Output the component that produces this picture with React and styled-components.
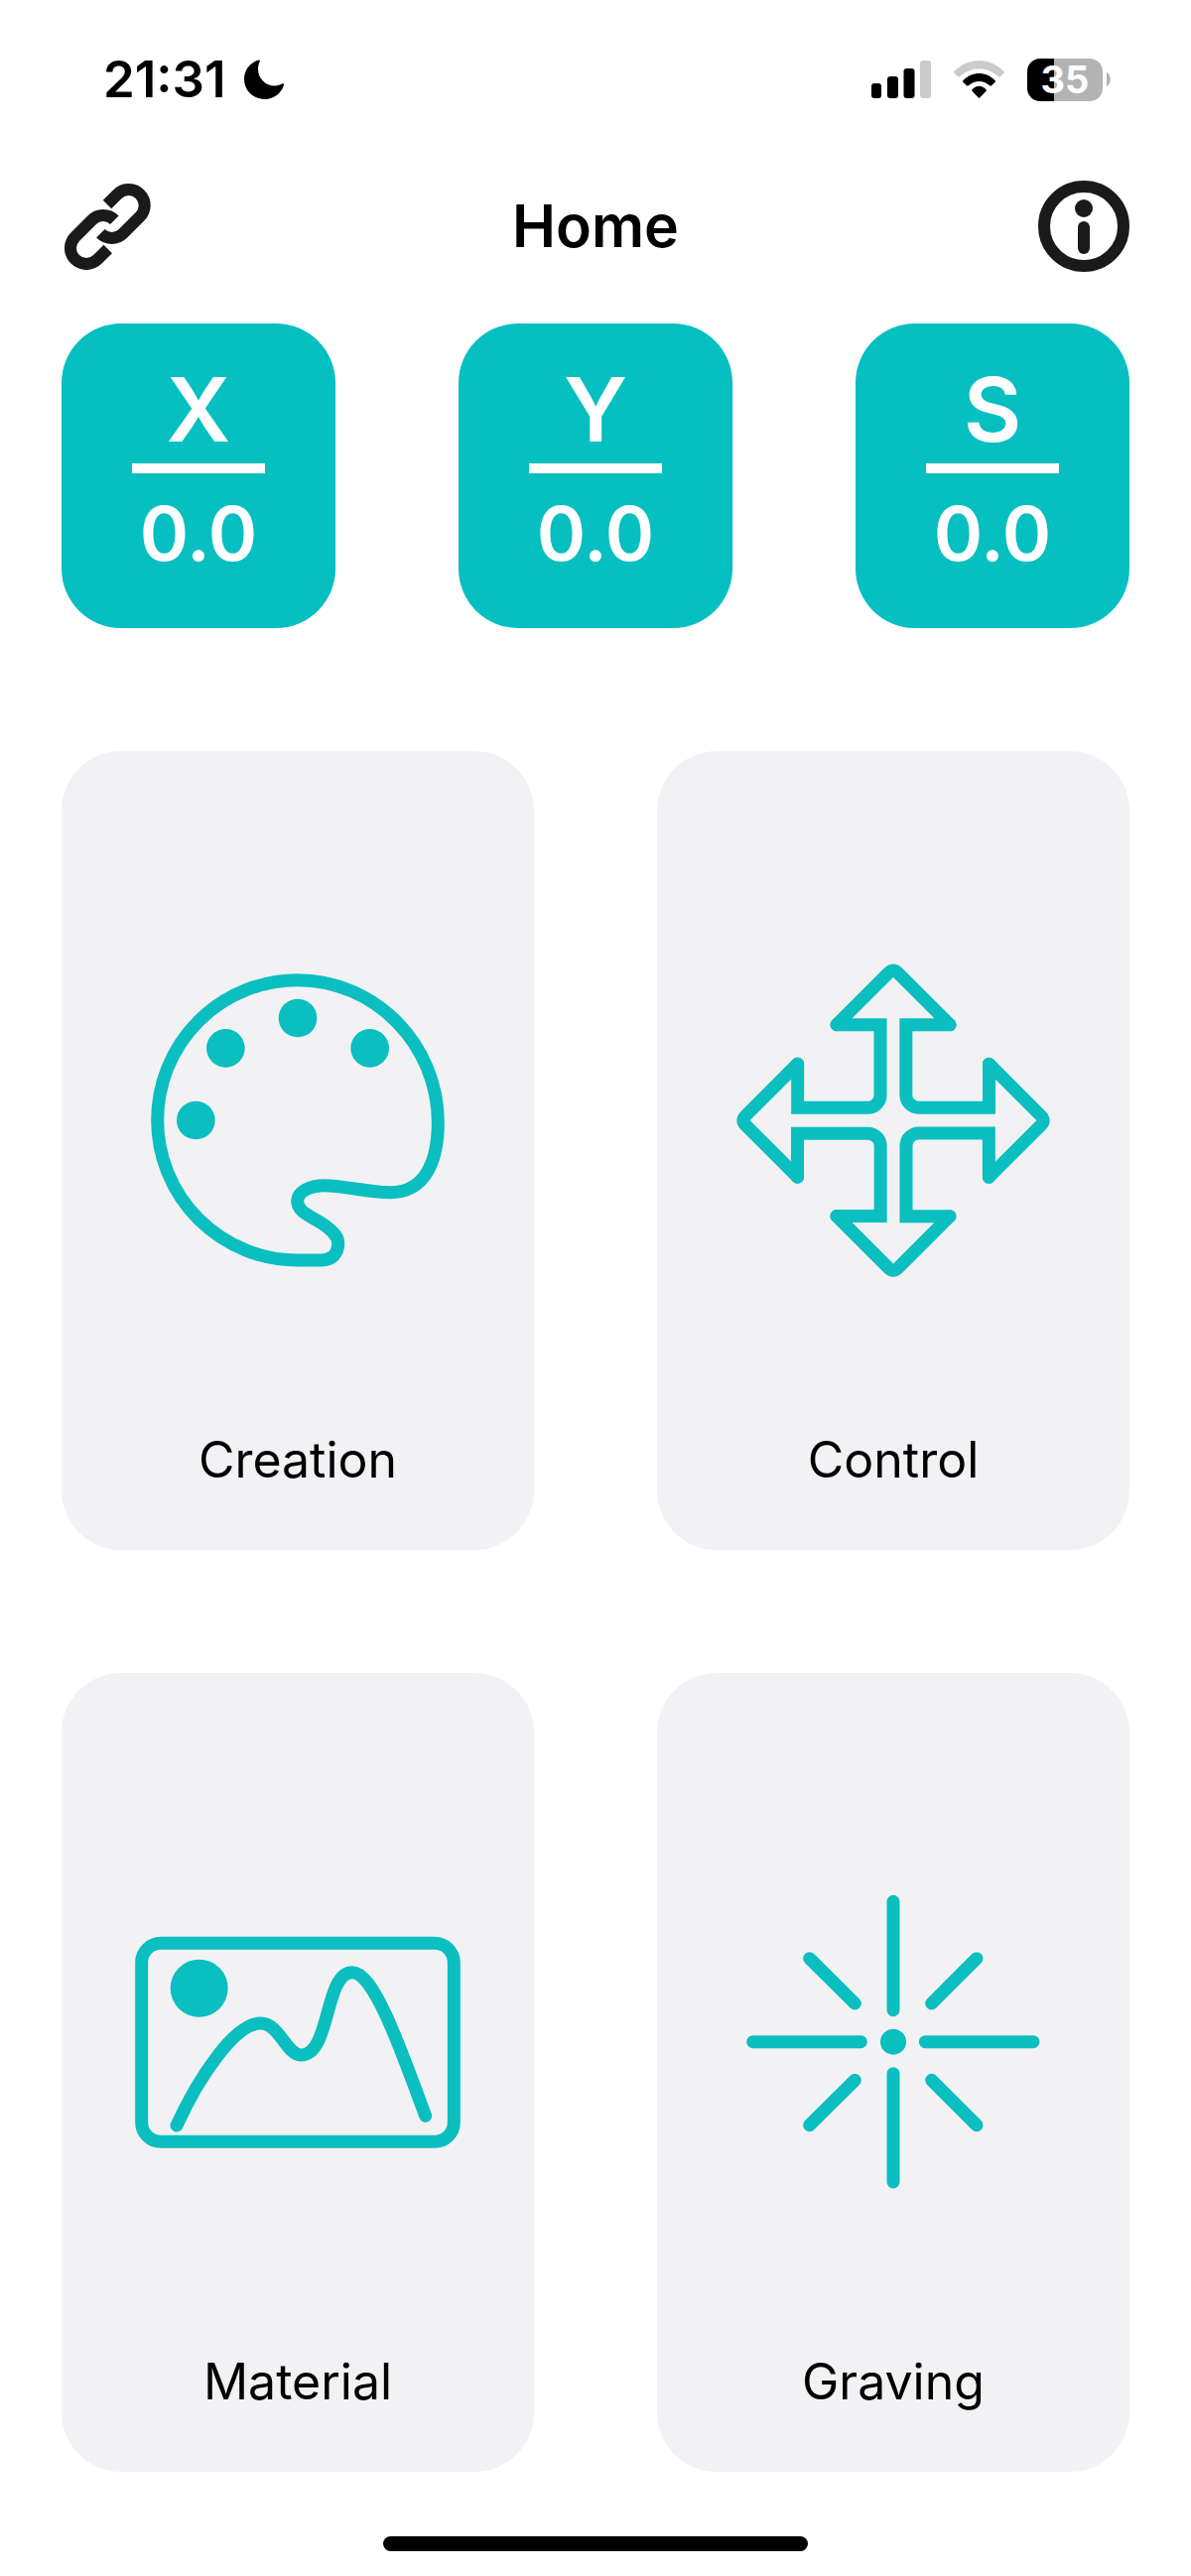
import styled, { createGlobalStyle } from "styled-components";

const axes = [
  { name: "X", value: "0.0" },
  { name: "Y", value: "0.0" },
  { name: "S", value: "0.0" },
];

const menu = [
  { label: "Creation", path: "#creation", Icon: PaletteIcon },
  { label: "Control", path: "#control", Icon: ArrowsIcon },
  { label: "Material", path: "#material", Icon: PictureIcon },
  { label: "Graving", path: "#graving", Icon: LaserIcon },
];

export default function App() {
  return (
    <>
      <GlobalStyle />
      <StatusBar />
      <Header>
        <IconButton type="button" aria-label="Connect">
          <LinkIcon />
        </IconButton>
        <h1>Home</h1>
        <IconButton type="button" aria-label="Information">
          <InfoIcon />
        </IconButton>
      </Header>
      <main>
        <Axes>
          {axes.map((axis) => (
            <Axis key={axis.name}>
              <AxisName>{axis.name}</AxisName>
              <Divider />
              <AxisValue>{axis.value}</AxisValue>
            </Axis>
          ))}
        </Axes>
        <Menu>
          {menu.map(({ label, path, Icon }) => (
            <Card key={label} href={path}>
              <Icon />
              <p>{label}</p>
            </Card>
          ))}
        </Menu>
      </main>
      <HomeIndicator />
    </>
  );
}

function StatusBar() {
  return (
    <Status>
      <Clock>
        <span>21:31</span>
        <svg width="40" height="40" viewBox="0 0 40 40" aria-hidden="true">
          <path d="M14.5 0.5C6 3 0 10.500 0 19.500C0 31 9 40 20.500 40C29.500 40 37 34.500 40 26C40.400 24.500 39.500 24 38 24.600C36 25.400 33.500 26.500 31 26.500C21.500 26.500 14 19 14 9.500C14 7 14.500 4.500 15.600 2.300C16.200 0.900 15.700 0.100 14.500 0.500Z" />
        </svg>
      </Clock>
      <Indicators>
        <svg width="60" height="38" viewBox="0 0 60 38" aria-hidden="true">
          <rect x="0" y="23" width="10" height="15" rx="3" />
          <rect x="16" y="16" width="11" height="22" rx="3" />
          <rect x="32.500" y="8" width="11" height="30" rx="3" />
          <rect x="49" y="0" width="11" height="38" rx="3" fill="#cbcbcb" />
        </svg>
        <svg width="51" height="38" viewBox="0 0 153 114" aria-hidden="true">
          <path
            fill="#cbcbcb"
            d="M2 32C23 12 49 0 76.500 0S130 12 151 32Q154 35 151 38L140 49Q137 51 134 48C118 34 98 25 76.500 25S35 34 19 48Q16 51 13 49L2 38Q-1 35 2 32Z"
          />
          <path d="M29 59C42 47 58 39 76.500 39S111 47 124 59Q128 62 125 65L114 76Q111 78 108 75C99 68 88 63 76.500 63S54 68 45 75Q42 78 39 76L28 65Q25 62 29 59Z" />
          <path d="M56 87C61 81 68 77 76.500 77S92 81 97 87Q100 90 97 93L79 112Q76.500 115 74 112L56 93Q53 90 56 87Z" />
        </svg>
        <BatteryWrap>
          <Battery>35</Battery>
          <svg width="4" height="14" viewBox="0 0 4 14" aria-hidden="true">
            <path d="M0 0C5 2 5 12 0 14Z" fill="#b3b3b3" />
          </svg>
        </BatteryWrap>
      </Indicators>
    </Status>
  );
}

function LinkIcon() {
  return (
    <svg width="87" height="87" viewBox="75 72 261 261" aria-hidden="true">
      <g fill="none" stroke="#1a1a1a" strokeWidth="36">
        <path d="M204 135L235 104A48 48 0 0 1 303 172L252 223A48 48 0 0 1 184 223" />
        <path d="M206 270L175 301A48 48 0 0 1 107 233L158 182A48 48 0 0 1 226 182" />
      </g>
    </svg>
  );
}

function InfoIcon() {
  return (
    <svg width="92" height="92" viewBox="0 0 92 92" aria-hidden="true">
      <circle cx="46" cy="46" r="40" fill="none" stroke="#1a1a1a" strokeWidth="12" />
      <circle cx="46" cy="28" r="9" fill="#1a1a1a" />
      <path d="M46 47V68" stroke="#1a1a1a" strokeWidth="12" strokeLinecap="round" />
    </svg>
  );
}

function PaletteIcon() {
  return (
    <CardIcon viewBox="-30 -32 1080 1080" aria-hidden="true">
      <path d="M510 931A424 424 0 0 1 86 508A424 424 0 0 1 510 84C745 84 934 280 934 515C934 640 890 726 790 726C720 726 650 705 590 705C545 705 509 725 509 752C509 790 560 800 600 832C622 850 632 862 632 880C632 910 615 931 580 931Z" />
      <Dot cx="510" cy="199" r="58" />
      <Dot cx="292" cy="290" r="58" />
      <Dot cx="728" cy="290" r="58" />
      <Dot cx="202" cy="508" r="58" />
    </CardIcon>
  );
}

function ArrowsIcon() {
  return (
    <CardIcon viewBox="0 -3 1080 1080" aria-hidden="true">
      {[0, 90, 180, 270].map((angle) => (
        <g key={angle} transform={`rotate(${angle} 540 537.5)`}>
          <path d="M369 248L526 91Q540 77 554 91L711 248" />
          <path
            strokeLinejoin="miter"
            d="M369 248H501V461A38 38 0 0 1 463 499H251V366"
          />
        </g>
      ))}
    </CardIcon>
  );
}

function PictureIcon() {
  return (
    <CardIcon viewBox="0 -157 1080 1080" aria-hidden="true">
      <rect x="68" y="84" width="944" height="600" rx="58" />
      <Dot cx="242" cy="220" r="87" />
      <path d="M174 635C240 490 350 326 428 326C485 326 505 422 550 422C640 422 620 172 705 172C770 172 850 400 926 606" />
    </CardIcon>
  );
}

function LaserIcon() {
  return (
    <CardIcon viewBox="-30 -35 1080 1080" aria-hidden="true">
      <Dot cx="510" cy="504" r="39" />
      <path d="M510 80V408M510 600V928M86 504H412M607 504H933" />
      <path d="M257 252L394 388M762 252L626 388M257 756L394 620M762 756L626 620" />
    </CardIcon>
  );
}

const GlobalStyle = createGlobalStyle`
  * {
    box-sizing: border-box;
    margin: 0;
    padding: 0;
  }
  body {
    background-color: #ffffff;
    color: #000000;
    font-family: Inter, "Liberation Sans", sans-serif;
  }
  svg {
    display: block;
    flex-shrink: 0;
  }
`;

const Status = styled.div`
  height: 160px;
  padding: 0 81px 0 104px;
  display: flex;
  align-items: center;
  justify-content: space-between;
`;
const Clock = styled.div`
  display: flex;
  align-items: center;
  gap: 18px;
  font-size: 51px;
  font-weight: 600;
  line-height: 60px;
`;
const Indicators = styled.div`
  display: flex;
  align-items: center;
  gap: 23px;
`;
const BatteryWrap = styled.div`
  display: flex;
  align-items: center;
  gap: 4px;
`;
const Battery = styled.div`
  width: 76px;
  height: 43px;
  border-radius: 13px;
  background: linear-gradient(to right, #000000 27px, #b3b3b3 27px);
  color: #ffffff;
  font-size: 38px;
  font-weight: 700;
  line-height: 43px;
  text-align: center;
`;
const Header = styled.header`
  height: 136px;
  padding: 0 62px;
  display: flex;
  align-items: center;
  justify-content: space-between;
  h1 {
    font-size: 59px;
    font-weight: 600;
    line-height: 72px;
  }
`;
const IconButton = styled.button`
  width: 92px;
  height: 92px;
  border: none;
  background: none;
  display: flex;
  align-items: center;
  justify-content: center;
  cursor: pointer;
`;
const Axes = styled.section`
  padding: 30px 62px 0;
  display: grid;
  grid-template-columns: repeat(3, 1fr);
  gap: 124px;
`;
const Axis = styled.div`
  padding: 37px 0 45px;
  border-radius: 60px;
  background-color: #06bfc1;
  color: #ffffff;
  display: flex;
  flex-direction: column;
  align-items: center;
  font-weight: 600;
  line-height: 100px;
`;
const AxisName = styled.p`
  font-size: 90px;
`;
const AxisValue = styled.p`
  font-size: 75px;
`;
const Divider = styled.div`
  width: 134px;
  height: 10px;
  margin: 4px 0 11px;
  background-color: #ffffff;
`;
const Menu = styled.nav`
  padding: 124px 62px 65px;
  display: grid;
  grid-template-columns: repeat(2, 1fr);
  gap: 124px;
`;
const Card = styled.a`
  padding: 192px 0 61px;
  border-radius: 60px;
  background-color: #f2f2f5;
  color: #000000;
  text-decoration: none;
  display: flex;
  flex-direction: column;
  align-items: center;
  gap: 132px;
  p {
    font-size: 50px;
    line-height: 60px;
  }
`;
const CardIcon = styled.svg`
  width: 360px;
  height: 360px;
  fill: none;
  stroke: #0bbec0;
  stroke-width: 39px;
  stroke-linecap: round;
`;
const Dot = styled.circle`
  fill: #0bbec0;
  stroke: none;
`;
const HomeIndicator = styled.div`
  width: 428px;
  height: 15px;
  margin: 0 auto 25px;
  border-radius: 8px;
  background-color: #000000;
`;
